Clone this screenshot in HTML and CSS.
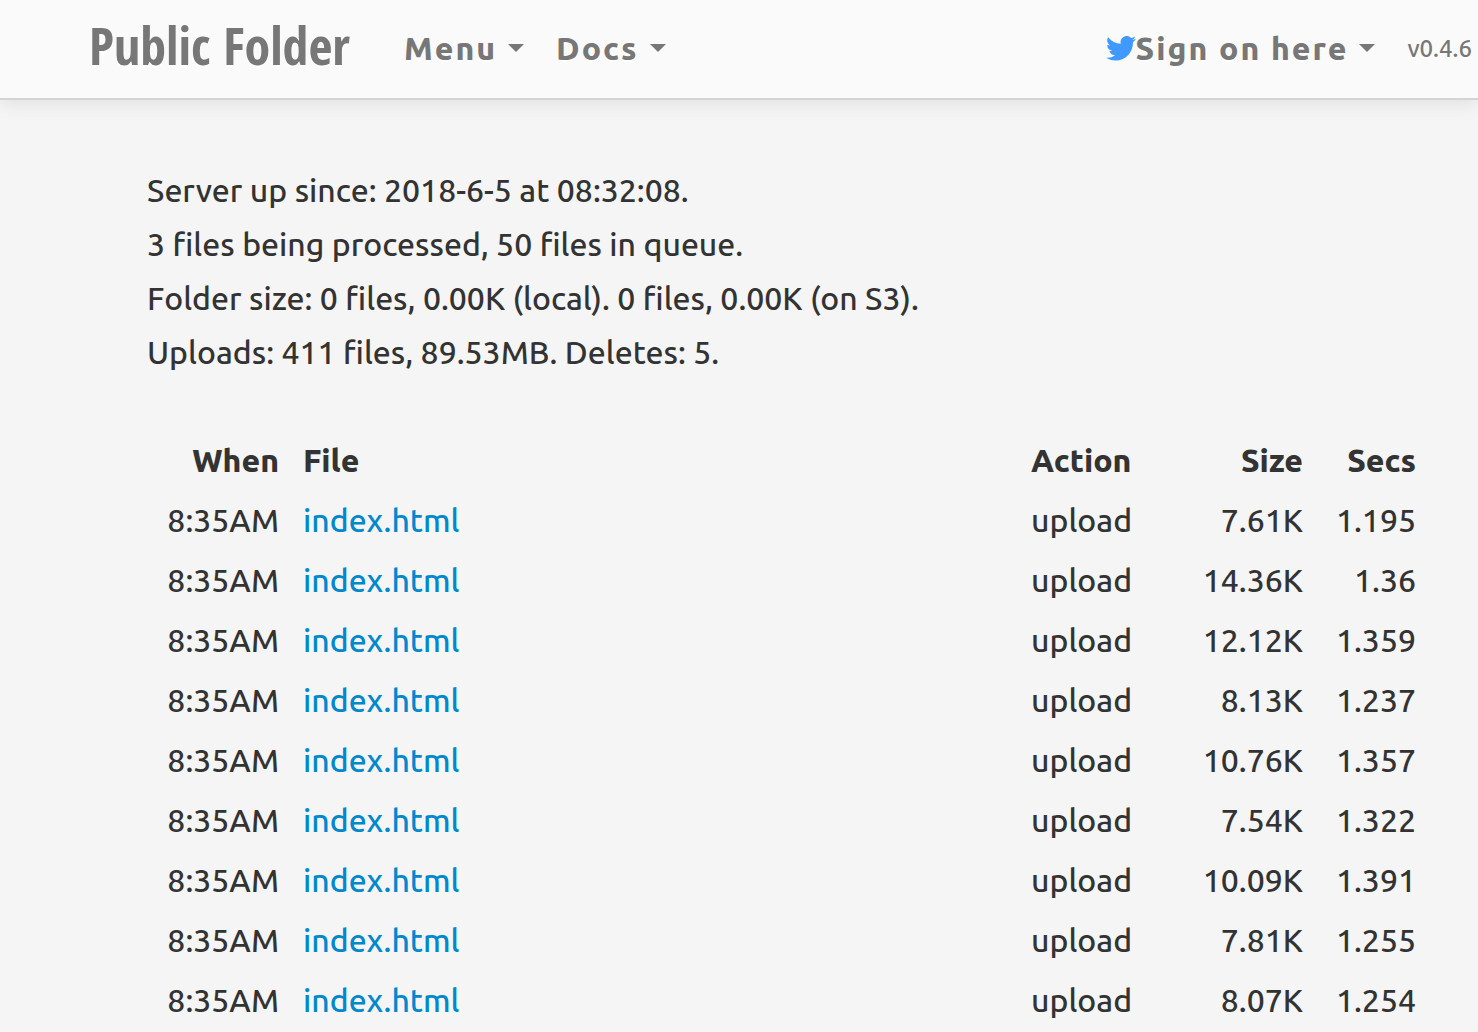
FILE: index.html
```html
<!DOCTYPE html>
<html lang="en">
<head>
    <meta charset="UTF-8">
    <meta name="viewport" content="width=device-width, initial-scale=1.0">
    <title>Public Folder</title>
    <link rel="stylesheet" href="styles.css">
</head>
<body>

<nav class="navbar">
    <a class="brand" href="#">Public Folder</a>
    <button class="nav-item" type="button">Menu<span class="caret"></span></button>
    <button class="nav-item" type="button">Docs<span class="caret"></span></button>
    <button class="nav-item nav-right" type="button">
        <svg class="twitter" viewBox="0 0 24 20" aria-hidden="true">
            <path d="M24 2.4a9.800 9.800 0 0 1-2.830.780A4.940 4.940 0 0 0 23.340.450a9.860 9.860 0 0 1-3.130 1.190 4.920 4.920 0 0 0-8.390 4.490A13.980 13.980 0 0 1 1.670.980a4.920 4.920 0 0 0 1.520 6.570 4.900 4.900 0 0 1-2.230-.610v.060a4.930 4.930 0 0 0 3.950 4.830 4.930 4.930 0 0 1-2.220.080 4.930 4.930 0 0 0 4.600 3.420A9.880 9.880 0 0 1 0 17.370a13.940 13.940 0 0 0 7.550 2.210c9.140 0 14.310-7.720 13.990-14.640A10 10 0 0 0 24 2.400z"/>
        </svg>
        Sign on here<span class="caret"></span>
    </button>
    <span class="version">v0.4.6</span>
</nav>

<div class="container">
    <div class="stats">
        Server up since: 2018-6-5 at 08:32:08.<br>
        3 files being processed, 50 files in queue.<br>
        Folder size: 0 files, 0.00K (local). 0 files, 0.00K (on S3).<br>
        Uploads: 411 files, 89.53MB. Deletes: 5.
    </div>

    <table class="log">
        <thead>
            <tr>
                <th class="when">When</th>
                <th class="file">File</th>
                <th class="action">Action</th>
                <th class="size">Size</th>
                <th class="secs">Secs</th>
            </tr>
        </thead>
        <tbody>
            <tr><td class="when">8:35AM</td><td><a href="#">index.html</a></td><td>upload</td><td class="size">7.61K</td><td class="secs">1.195</td></tr>
            <tr><td class="when">8:35AM</td><td><a href="#">index.html</a></td><td>upload</td><td class="size">14.36K</td><td class="secs">1.36</td></tr>
            <tr><td class="when">8:35AM</td><td><a href="#">index.html</a></td><td>upload</td><td class="size">12.12K</td><td class="secs">1.359</td></tr>
            <tr><td class="when">8:35AM</td><td><a href="#">index.html</a></td><td>upload</td><td class="size">8.13K</td><td class="secs">1.237</td></tr>
            <tr><td class="when">8:35AM</td><td><a href="#">index.html</a></td><td>upload</td><td class="size">10.76K</td><td class="secs">1.357</td></tr>
            <tr><td class="when">8:35AM</td><td><a href="#">index.html</a></td><td>upload</td><td class="size">7.54K</td><td class="secs">1.322</td></tr>
            <tr><td class="when">8:35AM</td><td><a href="#">index.html</a></td><td>upload</td><td class="size">10.09K</td><td class="secs">1.391</td></tr>
            <tr><td class="when">8:35AM</td><td><a href="#">index.html</a></td><td>upload</td><td class="size">7.81K</td><td class="secs">1.255</td></tr>
            <tr><td class="when">8:35AM</td><td><a href="#">index.html</a></td><td>upload</td><td class="size">8.07K</td><td class="secs">1.254</td></tr>
        </tbody>
    </table>
</div>

</body>
</html>
```
FILE: styles.css
```css
body {
    margin: 0;
    background-color: #f5f5f5;
    color: #333;
    font-family: Ubuntu, "Noto Sans", sans-serif;
    font-size: 32px;
    font-weight: 470;
}
a {
    color: #08c;
    text-decoration: none;
}
.navbar {
    display: flex;
    align-items: center;
    height: 96px;
    padding: 0 6px 2px 89px;
    background-color: #fafafa;
    border-bottom: 2px solid #d4d4d4;
    box-shadow: 0 2px 20px rgba(0, 0, 0, 0.1);
    color: #777;
    text-shadow: 0 2px 0 #fff;
    white-space: nowrap;
}
.brand {
    width: 315px;
    padding-bottom: 8px;
    color: #777;
    font-family: Rancho, "Open Sans Condensed", "Roboto Condensed", "Noto Sans", cursive;
    font-size: 52px;
    font-weight: bold;
}
.nav-item {
    display: flex;
    align-items: center;
    margin: 0 32px 0 0;
    padding: 0;
    border: none;
    background: none;
    color: inherit;
    font-family: inherit;
    font-size: 32px;
    font-weight: 800;
    letter-spacing: 2px;
    text-shadow: inherit;
    cursor: pointer;
}
.nav-right {
    margin-left: auto;
}
.caret {
    margin-left: 11px;
    border-top: 8px solid #777;
    border-left: 8px solid transparent;
    border-right: 8px solid transparent;
}
.twitter {
    width: 30px;
    height: 25px;
    fill: #4099ff;
}
.version {
    font-size: 24px;
}
.container {
    padding: 63px 50px 0 147px;
}
.stats {
    margin-bottom: 51px;
    line-height: 54px;
}
.log {
    width: 100%;
    border-collapse: collapse;
    table-layout: fixed;
    line-height: 40px;
}
th, td {
    padding: 10px 12px;
    text-align: left;
    white-space: nowrap;
}
th {
    font-weight: 800;
}
.when {
    width: 120px;
}
.action {
    width: 124px;
}
.size {
    width: 124px;
}
.secs {
    width: 89px;
}
.when, .size, .secs {
    text-align: right;
}
```
